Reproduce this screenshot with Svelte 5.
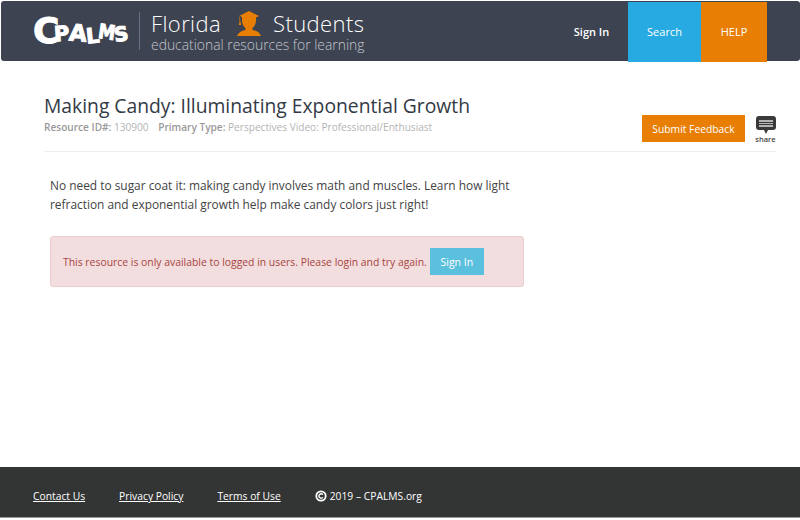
<script>
  const footerLinks = ['Contact Us', 'Privacy Policy', 'Terms of Use']
</script>

<div class="page">
  <header>
    <a class="logo" href="#top">
      <span class="c">C</span><span class="p">P</span><span class="a">A</span><span class="l">L</span><span class="m">M</span><span class="s">S</span>
    </a>
    <div class="brand">
      <div class="brand-top">
        <span>Florida</span>
        <svg width="26" height="26" viewBox="0 0 26 26">
          <path fill="#e87e04" d="M13 0 L23 5 L20 6.500 L20 10 Q19.500 15 16.500 17 L16.500 19 Q23 20 25 25 L1 25 Q3 20 9.500 19 L9.500 17 Q6.500 15 6 10 L6 6.500 L3 5 Z" />
          <path fill="#e87e04" d="M3.500 5.500 L4.500 5.500 L4.500 11 L5.200 14 L2.800 14 L3.500 11 Z" />
          <path fill="#3d4351" d="M3.800 5 L4.300 5 L5.600 6.300 L5.600 11 L4.800 11 Z" />
        </svg>
        <span>Students</span>
      </div>
      <div class="brand-sub">educational resources for learning</div>
    </div>
    <nav>
      <a class="signin" href="#top">Sign In</a>
      <a class="search" href="#top">Search</a>
      <a class="help" href="#top">HELP</a>
    </nav>
  </header>

  <main>
    <div class="title-row">
      <div class="title-text">
        <h1>Making Candy: Illuminating Exponential Growth</h1>
        <div class="meta"><b>Resource ID#:</b> 130900 <b class="second">Primary Type:</b> Perspectives Video: Professional/Enthusiast</div>
      </div>
      <div class="actions">
        <a class="feedback" href="#top">Submit Feedback</a>
        <div class="share">
          <svg width="20" height="19" viewBox="0 0 20 19">
            <path fill="#3a3a3a" d="M3 0 H17 Q20 0 20 3 V11 Q20 14 17 14 H12 L10 18 L8 14 H3 Q0 14 0 11 V3 Q0 0 3 0 Z" />
            <path fill="#b5b5b5" d="M3 4 H17 V6 H3 Z M3 7 H17 V8 H3 Z M3 9 H17 V11 H3 Z" />
          </svg>
          <span>share</span>
        </div>
      </div>
    </div>

    <div class="body">
      <p>No need to sugar coat it: making candy involves math and muscles. Learn how light refraction and exponential growth help make candy colors just right!</p>
      <div class="alert">
        <span>This resource is only available to logged in users. Please login and try again.</span>
        <a class="btn" href="#top">Sign In</a>
      </div>
    </div>
  </main>

  <footer>
    {#each footerLinks as link}
      <a href="#top">{link}</a>
    {/each}
    <span class="copy">
      <svg width="12" height="12" viewBox="0 0 12 12">
        <circle cx="6" cy="6" r="4.700" fill="none" stroke="#fff" stroke-width="1.800" />
        <path d="M7.800 4.600 A2.200 2.200 0 1 0 7.800 7.400" fill="none" stroke="#fff" stroke-width="1.400" />
      </svg>
      2019 – CPALMS.org
    </span>
  </footer>
</div>

<style>
  :global(body) {
    background: #fff;
  }

  .page {
    width: 800px;
    height: 520px;
    display: flex;
    flex-direction: column;
    font-family: "Open Sans", "Noto Sans", sans-serif;
    overflow: hidden;
  }

  a {
    text-decoration: none;
    color: inherit;
  }

  header {
    height: 60px;
    margin: 1px 0 0 1px;
    padding-left: 32px;
    padding-right: 33px;
    display: flex;
    align-items: center;
    background: #3d4351;
    border-radius: 3px;
  }

  .logo {
    width: 106px;
    display: flex;
    align-items: center;
    color: #fff;
    font-family: "DejaVu Sans", sans-serif;
    font-weight: 700;
    line-height: 1;
    -webkit-text-stroke: 1px #fff;
  }

  .logo span {
    display: inline-block;
  }

  .c {
    font-size: 36px;
    margin-right: -5px;
  }

  .p {
    font-size: 21px;
    margin-right: -1px;
    transform: translateY(3px) rotate(-4deg);
  }

  .a {
    font-size: 23px;
    margin-right: -1px;
    transform: translateY(2px) rotate(5deg);
  }

  .l {
    font-size: 21px;
    margin-right: -2px;
    transform: translateY(5px) rotate(-6deg);
  }

  .m {
    font-size: 20px;
    margin-right: -3px;
    transform: translateY(1px) rotate(8deg) scaleX(.85);
  }

  .s {
    font-size: 20px;
    transform: translateY(3px) rotate(-8deg);
  }

  .brand {
    padding-left: 11px;
    border-left: 1px solid #6b7080;
    height: 38px;
    color: #fff;
  }

  .brand-top {
    display: flex;
    align-items: center;
    gap: 15px;
    height: 23px;
    font-size: 22px;
    line-height: 23px;
    letter-spacing: .4px;
    font-weight: 300;
  }

  .brand-top svg {
    margin-right: -4px;
  }

  .brand-sub {
    font-size: 13.900px;
    line-height: 20px;
    color: #c4c6cc;
    font-weight: 300;
  }

  nav {
    margin-left: auto;
    display: flex;
    height: 100%;
    font-size: 11px;
    align-items: stretch;
    margin-top: 1px;
  }

  nav a {
    display: flex;
    align-items: center;
    justify-content: center;
    color: #fff;
  }

  .signin {
    width: 63px;
    margin-right: 5px;
    font-weight: 600;
  }

  .search {
    width: 73px;
    background: #27aae1;
  }

  .help {
    width: 66px;
    background: #e87e04;
  }

  main {
    flex: 1;
    padding: 31px 24px 0 44px;
  }

  .title-row {
    display: flex;
    justify-content: space-between;
    align-items: flex-end;
    padding-bottom: 7px;
    border-bottom: 1px solid #eee;
  }

  h1 {
    margin: 0;
    font-size: 19.300px;
    line-height: 28px;
    font-weight: 400;
    color: #333a45;
  }

  .meta {
    font-size: 10.100px;
    line-height: 14px;
    color: #b4b4b4;
    margin-bottom: 10px;
  }

  .meta b {
    color: #999;
    font-weight: 600;
  }

  .second {
    margin-left: 7px;
  }

  .actions {
    display: flex;
    align-items: flex-end;
    gap: 10px;
  }

  .feedback {
    width: 103px;
    height: 27px;
    display: flex;
    align-items: center;
    justify-content: center;
    background: #e87e04;
    color: #fff;
    font-size: 10.300px;
    margin-bottom: 2px;
  }

  .share {
    width: 21px;
    display: flex;
    flex-direction: column;
    align-items: center;
    font-size: 7.500px;
    line-height: 9px;
    font-weight: 600;
    color: #444;
  }

  .body {
    padding: 24px 0 0 6px;
    width: 474px;
  }

  p {
    margin: 0 0 22px;
    font-size: 11.900px;
    line-height: 19px;
    color: #444;
  }

  .alert {
    height: 51px;
    box-sizing: border-box;
    padding: 11px 12px;
    display: flex;
    align-items: center;
    gap: 3px;
    background: #f2dede;
    border: 1px solid #ebccd1;
    border-radius: 3px;
    color: #a94442;
    font-size: 10.400px;
    white-space: nowrap;
  }

  .btn {
    width: 54px;
    height: 27px;
    display: flex;
    align-items: center;
    justify-content: center;
    background: #5bc0de;
    color: #fff;
    font-size: 10.500px;
  }

  footer {
    height: 50px;
    margin-bottom: 2px;
    padding-left: 33px;
    display: flex;
    align-items: center;
    gap: 34px;
    background: #333535;
    color: #fff;
    font-size: 10.300px;
    border-bottom: 1px solid #999;
  }

  footer a,
  .copy {
    position: relative;
    top: 4px;
  }

  footer a {
    text-decoration: underline;
  }

  .copy {
    display: flex;
    align-items: center;
    gap: 3px;
  }
</style>
